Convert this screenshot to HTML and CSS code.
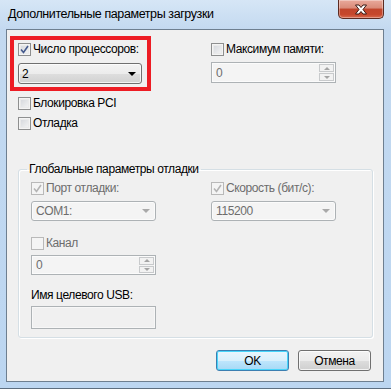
FILE: index.html
```html
<!DOCTYPE html>
<html lang="ru">
<head>
<meta charset="utf-8">
<link rel="stylesheet" href="styles.css">
</head>
<body>
<div class="window">
  <div class="titlebar">
    <span class="title">Дополнительные параметры загрузки</span>
    <div class="close">
      <svg width="14" height="11" viewBox="0 0 14 11"><path d="M1.5 1h3.5l2 2.5L9 1h3.5L9 5.5l3.5 4.5H9L7 7.5 5 10H1.5L5 5.5z" fill="#fff" stroke="#3a1a14" stroke-width="1" stroke-linejoin="round"/></svg>
    </div>
  </div>
  <div class="client">
    <div class="top">
      <div class="col">
        <div class="check"><span class="box checked"><svg width="9" height="9" viewBox="0 0 9 9"><path d="M1 4.5l2.5 3L8 1" fill="none" stroke="#44598c" stroke-width="1.6"/></svg></span>Число процессоров:</div>
        <div class="combo"><span>2</span><span class="arrow"></span></div>
      </div>
      <div class="col">
        <div class="check"><span class="box"></span>Максимум памяти:</div>
        <div class="spin off"><span class="val">0</span><span class="spinbtns"><span class="sb"><i class="up"></i></span><span class="sb"><i class="down"></i></span></span></div>
      </div>
    </div>
    <div class="check solo first"><span class="box"></span>Блокировка PCI</div>
    <div class="check solo"><span class="box"></span>Отладка</div>
    <fieldset class="group">
      <legend>Глобальные параметры отладки</legend>
      <div class="grid">
        <div class="col">
          <div class="check off"><span class="box checked dis"><svg width="9" height="9" viewBox="0 0 9 9"><path d="M1 4.5l2.5 3L8 1" fill="none" stroke="#b4b4b4" stroke-width="1.6"/></svg></span>Порт отладки:</div>
          <div class="combo off"><span>COM1:</span><span class="arrow"></span></div>
          <div class="check off gap"><span class="box dis"></span>Канал</div>
          <div class="spin off small"><span class="val">0</span><span class="spinbtns"><span class="sb"><i class="up"></i></span><span class="sb"><i class="down"></i></span></span></div>
          <div class="lbl">Имя целевого USB:</div>
          <div class="edit off"></div>
        </div>
        <div class="col">
          <div class="check off"><span class="box checked dis"><svg width="9" height="9" viewBox="0 0 9 9"><path d="M1 4.5l2.5 3L8 1" fill="none" stroke="#b4b4b4" stroke-width="1.6"/></svg></span>Скорость (бит/с):</div>
          <div class="combo off"><span>115200</span><span class="arrow"></span></div>
        </div>
      </div>
    </fieldset>
    <div class="buttons">
      <div class="btn default">OK</div>
      <div class="btn">Отмена</div>
    </div>
    <div class="highlight"></div>
  </div>
</div>
</body>
</html>
```
FILE: styles.css
```css
* { box-sizing: border-box; }
html, body { margin: 0; padding: 0; }
body {
  width: 391px; height: 389px; overflow: hidden;
  font-family: "Liberation Sans", Arial, sans-serif;
  font-size: 12px;
  letter-spacing: -0.4px;
}
.window {
  width: 391px; height: 389px;
  background: linear-gradient(180deg, #d6e6f6 0px, #c3d9f0 30px, #bcd6f1 100%);
  display: flex; flex-direction: column;
  border-bottom: 1px solid #5d6e80;
}
.titlebar {
  height: 29px; flex: none;
  display: flex; align-items: flex-start; justify-content: space-between;
  padding-left: 8px;
}
.title {
  margin-top: 7px;
  font-size: 12.5px; letter-spacing: -0.4px; color: #000;
}
.close {
  width: 46px; height: 19px; margin-right: 7px;
  border: 1px solid #5c2b22; border-top: none;
  border-radius: 0 0 5px 5px;
  background: linear-gradient(180deg, #e9a99b 0%, #d98a78 45%, #c1452c 50%, #c6472c 80%, #d86a4e 100%);
  box-shadow: inset 0 0 0 1px rgba(255,255,255,0.35);
  display: flex; align-items: center; justify-content: center;
}
.client {
  position: relative;
  flex: 1;
  margin: 0 7px 6px 6px;
  border: 1px solid #6e7f90;
  background: #f0f0f0;
  padding: 12px 11px 0 11px;
  display: flex; flex-direction: column;
}
.top { display: grid; grid-template-columns: 193px 1fr; }
.col { display: flex; flex-direction: column; align-items: flex-start; }
.check {
  display: flex; align-items: center; height: 15px; line-height: 15px;
  color: #000; white-space: nowrap;
}
.check.off { color: #6d6d6d; }
.box {
  width: 13px; height: 13px; margin-right: 2px; flex: none;
  border: 1px solid #8e8f8f;
  background: linear-gradient(135deg, #d0d3d8, #f8f8f8);
  box-shadow: inset 0 0 0 1px #f4f4f4, inset 0 0 0 2px #eaeaea;
  display: flex; align-items: center; justify-content: center;
}
.box.dis { border-color: #b9b9b9; background: #f4f4f4; box-shadow: none; }
.box svg { display: block; }
.combo {
  margin-top: 6px;
  width: 124px; height: 21px;
  border: 1px solid #707070; border-radius: 3px;
  background: linear-gradient(180deg, #f3f3f3 0%, #ececec 50%, #dedede 51%, #d1d1d1 100%);
  box-shadow: inset 0 0 0 1px rgba(255,255,255,0.7);
  display: flex; align-items: center; justify-content: space-between;
  padding: 0 5px 0 3px; color: #000;
}
.arrow {
  width: 0; height: 0;
  border-left: 4px solid transparent; border-right: 4px solid transparent;
  border-top: 4px solid #000;
}
.combo.off {
  margin-top: 5px;
  width: 125px; height: 20px;
  border-color: #adb2b5; background: #f4f4f4; color: #6d6d6d;
  box-shadow: inset 0 0 0 1px #fbfbfb;
  padding: 0 5px 0 4px;
}
.combo.off .arrow { border-top-color: #a9a9a9; }
.spin {
  margin-top: 5px;
  width: 125px; height: 21px;
  border: 1px solid #adb2b5;
  background: #f4f4f4; color: #6d6d6d;
  box-shadow: inset 0 0 0 1px #fbfbfb;
  display: flex; align-items: center; justify-content: space-between;
  padding: 0 1px 0 4px;
}
.spin.small { margin-top: 4px; height: 20px; }
.spinbtns { display: flex; flex-direction: column; gap: 1px; height: 17px; }
.spin.small .spinbtns { height: 16px; }
.sb {
  width: 15px; flex: 1;
  border: 1px solid #c8cacc; background: #f2f2f2;
  display: flex; align-items: center; justify-content: center;
}
.sb i { width: 0; height: 0; border-left: 3px solid transparent; border-right: 3px solid transparent; }
.sb i.up { border-bottom: 3px solid #a4a4a4; }
.sb i.down { border-top: 3px solid #a4a4a4; }
.solo { margin-top: 5px; }
.solo.first { margin-top: 12px; }
.group {
  margin: 31px 0 0 0;
  width: 355px;
  border: 1px solid #d5dfe5; border-radius: 3px;
  box-shadow: inset 1px 1px 0 #fff, 1px 1px 0 #fff;
  padding: 4px 0 8px 0;
  min-width: 0;
}
.group legend {
  padding: 0 2px; margin-left: 8px;
  color: #000; line-height: 15px; height: 15px;
}
.grid { display: grid; grid-template-columns: 180px 1fr; padding: 0 12px; }
.gap { margin-top: 15px; }
.lbl { margin-top: 13px; height: 15px; line-height: 15px; color: #000; }
.edit {
  margin-top: 3px;
  width: 125px; height: 23px;
  border: 1px solid #adb2b5; background: #f0f0f0;
  box-shadow: inset 0 0 0 1px #f7f7f7;
}
.buttons {
  display: flex; justify-content: flex-end; gap: 9px;
  margin-top: 12px; padding-right: 1px;
}
.btn {
  width: 73px; height: 21px;
  border: 1px solid #707070; border-radius: 3px;
  background: linear-gradient(180deg, #f2f2f2 0%, #ebebeb 50%, #dddddd 51%, #cfcfcf 100%);
  box-shadow: inset 0 0 0 1px rgba(255,255,255,0.75);
  display: flex; align-items: center; justify-content: center;
  color: #000;
}
.btn.default {
  border-color: #3c7fb1;
  background: linear-gradient(180deg, #eaf6fd 0%, #d9f0fc 50%, #bee6fd 51%, #a7d9f5 100%);
  box-shadow: inset 0 0 0 1px #48d5fa;
}
.highlight {
  position: absolute; left: 3px; top: 6px;
  width: 141px; height: 55px;
  border: 4px solid #ed1c24;
  pointer-events: none;
}
```
